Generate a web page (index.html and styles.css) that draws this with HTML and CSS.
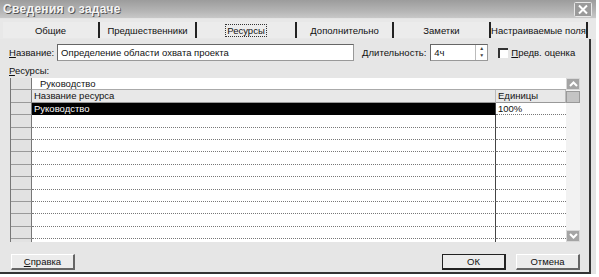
FILE: index.html
```html
<!DOCTYPE html>
<html lang="ru">
<head>
<meta charset="utf-8">
<link rel="stylesheet" href="styles.css">
</head>
<body>
<div class="dialog">
  <div class="titlebar">
    <span class="title">Сведения о задаче</span>
    <span class="close"><svg width="18" height="15" viewBox="0 0 18 15"><rect x="0.5" y="0.5" width="17" height="14" rx="1" fill="#9a9a9a" stroke="#e8e8e8"/><path d="M5 3.5 L13 11.5 M13 3.5 L5 11.5" stroke="#fff" stroke-width="2"/></svg></span>
  </div>
  <div class="tabs">
    <div class="tab">Общие</div>
    <div class="tab">Предшественники</div>
    <div class="tab active"><span class="focus">Ресурсы</span></div>
    <div class="tab">Дополнительно</div>
    <div class="tab">Заметки</div>
    <div class="tab">Настраиваемые поля</div>
  </div>
  <div class="panel">
    <div class="fields">
      <span class="lbl"><u>Н</u>азвание:</span>
      <span class="input name">Определение области охвата проекта</span>
      <span class="lbl dur"><u>Д</u>лительность:</span>
      <span class="input spin"><span class="val">4ч</span><span class="spinbtn"><span>▲</span><span>▼</span></span></span>
      <span class="check"></span>
      <span class="lbl"><u>П</u>редв. оценка</span>
    </div>
    <div class="reslbl"><u>Р</u>есурсы:</div>
    <div class="grid">
      <div class="gbody">
        <div class="grow entry"><div class="rh"></div><div class="entrycell">Руководство</div></div>
        <div class="grow head"><div class="rh"></div><div class="c1">Название ресурса</div><div class="c2">Единицы</div></div>
        <div class="grow sel"><div class="rh"></div><div class="c1">Руководство</div><div class="c2">100%</div></div>
        <div class="grow"><div class="rh"></div><div class="c1"></div><div class="c2"></div></div>
        <div class="grow"><div class="rh"></div><div class="c1"></div><div class="c2"></div></div>
        <div class="grow"><div class="rh"></div><div class="c1"></div><div class="c2"></div></div>
        <div class="grow"><div class="rh"></div><div class="c1"></div><div class="c2"></div></div>
        <div class="grow"><div class="rh"></div><div class="c1"></div><div class="c2"></div></div>
        <div class="grow"><div class="rh"></div><div class="c1"></div><div class="c2"></div></div>
        <div class="grow"><div class="rh"></div><div class="c1"></div><div class="c2"></div></div>
        <div class="grow"><div class="rh"></div><div class="c1"></div><div class="c2"></div></div>
        <div class="grow"><div class="rh"></div><div class="c1"></div><div class="c2"></div></div>
        <div class="grow"><div class="rh"></div><div class="c1"></div><div class="c2"></div></div>
        <div class="grow last"><div class="rh"></div><div class="c1"></div><div class="c2"></div></div>
      </div>
      <div class="scroll">
        <span class="sbtn"><svg width="11" height="8" viewBox="0 0 11 8"><path d="M2 6 L5.5 2.5 L9 6" fill="none" stroke="#fff" stroke-width="2"/></svg></span>
        <span class="thumb"></span>
        <span class="track"></span>
        <span class="sbtn"><svg width="11" height="8" viewBox="0 0 11 8"><path d="M2 2 L5.5 5.5 L9 2" fill="none" stroke="#fff" stroke-width="2"/></svg></span>
      </div>
    </div>
    <div class="buttons">
      <span class="btn"><u>С</u>правка</span>
      <span class="spacer"></span>
      <span class="btn def">ОК</span>
      <span class="btn">Отмена</span>
    </div>
  </div>
</div>
</body>
</html>
```
FILE: styles.css
```css
* { box-sizing: border-box; }
body {
  margin: 0;
  background: #fff;
  font-family: "Liberation Sans", Arial, sans-serif;
  font-size: 9.5px;
  color: #111;
}
.dialog {
  width: 596px;
  height: 274px;
  background: #e4e4e4;
  display: flex;
  flex-direction: column;
}
.titlebar {
  height: 18px;
  background: linear-gradient(#9c9c9c, #b4b4b4 60%, #c8c8c8);
  display: flex;
  align-items: center;
  justify-content: space-between;
  padding: 0 4px 0 3px;
}
.title {
  color: #f4f4f4;
  font-weight: bold;
  font-size: 12px;
  letter-spacing: 0.3px;
  text-shadow: 1px 1px 0 #555;
}
.close { display: flex; }
.tabs {
  display: flex;
  height: 20px;
  margin-top: 1px;
  padding-left: 3px;
  background: #e8e8e8;
}
.tab {
  width: 97px;
  display: flex;
  align-items: center;
  justify-content: center;
  white-space: nowrap;
  border-right: 2px solid #222;
  margin: 3px 0 1px;
  background: #ececec;
}
.tab.active { width: 100px; }
.focus { outline: 1px dotted #333; padding: 0 1px; }
.panel {
  flex: 1;
  margin-right: 5px;
  border-right: 2px solid #333;
  border-bottom: 2px solid #333;
  display: flex;
  flex-direction: column;
  padding: 5px 8px 0 9px;
  background: #e6e6e6;
}
.fields {
  display: flex;
  align-items: center;
  height: 17px;
}
.lbl { white-space: nowrap; }
.input {
  background: #fff;
  border: 1px solid #999;
  border-left-color: #666;
  border-top-color: #666;
  height: 17px;
  display: flex;
  align-items: center;
  padding-left: 3px;
}
.name { width: 297px; margin: 0 7px 0 3px; }
.dur { margin-right: 4px; margin-left: 1px; }
.spin { width: 58px; margin-right: 10px; justify-content: space-between; padding-right: 0; }
.spinbtn {
  width: 12px; height: 15px;
  display: flex; flex-direction: column;
  border-left: 1px solid #bbb;
  font-size: 5px; color: #444; line-height: 7px; text-align: center;
}
.check {
  width: 10px; height: 10px;
  border-left: 2px solid #333;
  border-top: 2px solid #333;
  background: #fff;
  margin-right: 3px;
}
.reslbl { margin-top: 4px; height: 12px; line-height: 12px; }
.grid {
  margin-top: 1px;
  margin-left: 1px;
  width: 570px;
  height: 164px;
  display: flex;
  border-left: 1px solid #777;
  background: #fff;
}
.gbody { flex: 1; display: flex; flex-direction: column; }
.grow { display: flex; height: 12.4px; flex: none; }
.rh {
  width: 21px;
  background: #e2e2e2;
  border-bottom: 1px solid #9a9a9a;
  border-right: 1px solid #777;
}
.entrycell {
  flex: 1;
  padding-left: 8px;
  border-bottom: 1px solid #aaa;
  line-height: 12px;
  background: #fff;
}
.c1 {
  flex: 1;
  border-bottom: 1px dotted #777;
  border-right: 1px solid #444;
  padding-left: 2px;
  line-height: 12px;
}
.c2 {
  width: 70px;
  border-bottom: 1px dotted #777;
  padding-left: 2px;
  line-height: 12px;
}
.head .c1, .head .c2 { background: #e8e8e8; border-bottom: 1px solid #999; border-right: 1px solid #bbb; }
.sel .c1 { background: #000; color: #fff; border-bottom-color: #000; }
.last .c1, .last .c2, .last .rh { border-bottom: none; }
.grow.last { flex: 1; }
.scroll {
  width: 14px;
  display: flex;
  flex-direction: column;
  background: #f2f2f2;
}
.sbtn {
  height: 12px;
  background: #a4a4a4;
  border: 1px solid #d8d8d8;
  display: flex; align-items: center; justify-content: center;
}
.thumb { height: 12px; background: #c4c4c4; border: 1px solid #999; margin-top: 1px; }
.track { flex: 1; }
.buttons {
  display: flex;
  margin-top: 12px;
  padding-left: 2px;
  padding-right: 1px;
}
.spacer { flex: 1; }
.btn {
  width: 64px; height: 16px;
  display: flex; align-items: center; justify-content: center;
  background: #ececec;
  border: 1px solid #fff;
  border-right: 2px solid #666;
  border-bottom: 2px solid #666;
}
.btn.def { border: 1px solid #222; border-right: 2px solid #222; border-bottom: 2px solid #222; margin-right: 10px; }
```
